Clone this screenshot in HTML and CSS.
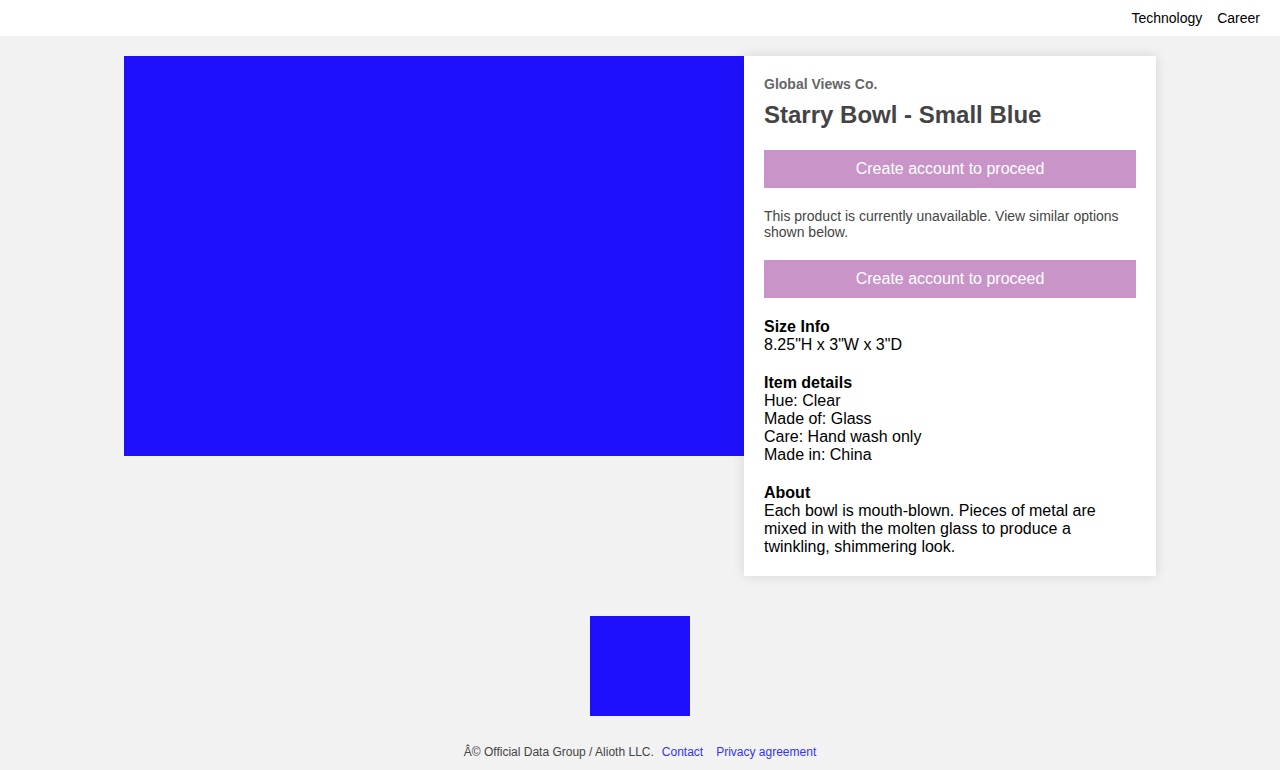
FILE: index.html
```html
<!DOCTYPE html>
<html>
<head>
<meta charset="utf-8">
<link rel="stylesheet" href="styles.css">
</head>
<body>
<header class="topbar">
  <nav class="nav">
    <a class="nav-link" href="#">Technology</a>
    <a class="nav-link" href="#">Career</a>
  </nav>
</header>
<main class="product">
  <div class="product-image"></div>
  <section class="card">
    <div class="brand">Global Views Co.</div>
    <h1 class="title">Starry Bowl - Small Blue</h1>
    <button class="cta">Create account to proceed</button>
    <p class="notice">This product is currently unavailable. View similar options shown below.</p>
    <button class="cta">Create account to proceed</button>
    <div class="info">
      <div class="info-label">Size Info</div>
      <div>8.25"H x 3"W x 3"D</div>
    </div>
    <div class="info">
      <div class="info-label">Item details</div>
      <div>Hue: Clear</div>
      <div>Made of: Glass</div>
      <div>Care: Hand wash only</div>
      <div>Made in: China</div>
    </div>
    <div class="info">
      <div class="info-label">About</div>
      <div>Each bowl is mouth-blown. Pieces of metal are mixed in with the molten glass to produce a twinkling, shimmering look.</div>
    </div>
  </section>
</main>
<footer class="footer">
  <div class="footer-logo"></div>
  <div class="footer-text">
    <span>Â© Official Data Group / Alioth LLC.</span>
    <a class="footer-link" href="#">Contact</a>
    <a class="footer-link" href="#">Privacy agreement</a>
  </div>
</footer>
</body>
</html>
```

FILE: styles.css
```css
* { box-sizing: border-box; }
html, body {
  margin: 0;
  padding: 0;
}
body {
  background: #f2f2f2;
  font-family: "Liberation Sans", Arial, sans-serif;
  color: #000;
}
.topbar {
  height: 36px;
  background: #fff;
  display: flex;
  justify-content: flex-end;
  align-items: center;
  padding: 0 20px;
}
.nav {
  display: flex;
  gap: 15px;
}
.nav-link {
  font-size: 14px;
  color: #000;
  text-decoration: none;
}
.product {
  display: flex;
  justify-content: center;
  align-items: flex-start;
  padding-top: 20px;
}
.product-image {
  width: 620px;
  height: 400px;
  background: #1f10fb;
}
.card {
  width: 412px;
  background: #fff;
  padding: 20px;
  box-shadow: 0 0 12px rgba(0, 0, 0, 0.12);
  font-size: 16px;
  line-height: 18px;
}
.brand {
  font-size: 14px;
  line-height: 16px;
  font-weight: bold;
  color: #666;
  margin-bottom: 9px;
}
.title {
  margin: 0 0 21px;
  font-size: 24px;
  line-height: 28px;
  font-weight: bold;
  color: #444;
}
.cta {
  display: block;
  width: 100%;
  height: 38px;
  border: 0;
  background: #c994c7;
  color: #fff;
  font-family: "Liberation Sans", Arial, sans-serif;
  font-size: 16px;
  padding: 0;
  margin-bottom: 20px;
}
.notice {
  margin: 0 0 20px;
  font-size: 14px;
  line-height: 16px;
  color: #444;
}
.info {
  margin-top: 20px;
}
.cta + .info { margin-top: 0; }
.info-label {
  font-weight: bold;
}
.footer {
  display: flex;
  flex-direction: column;
  align-items: center;
  padding-top: 40px;
}
.footer-logo {
  width: 100px;
  height: 100px;
  background: #1f10fb;
}
.footer-text {
  margin-top: 29px;
  font-size: 12px;
  line-height: 14px;
  color: #444;
  display: flex;
  gap: 8px;
  padding-bottom: 11px;
}
.footer-link {
  color: #3333ff;
  text-decoration: none;
}
.footer-link + .footer-link { margin-left: 5px; }
```
